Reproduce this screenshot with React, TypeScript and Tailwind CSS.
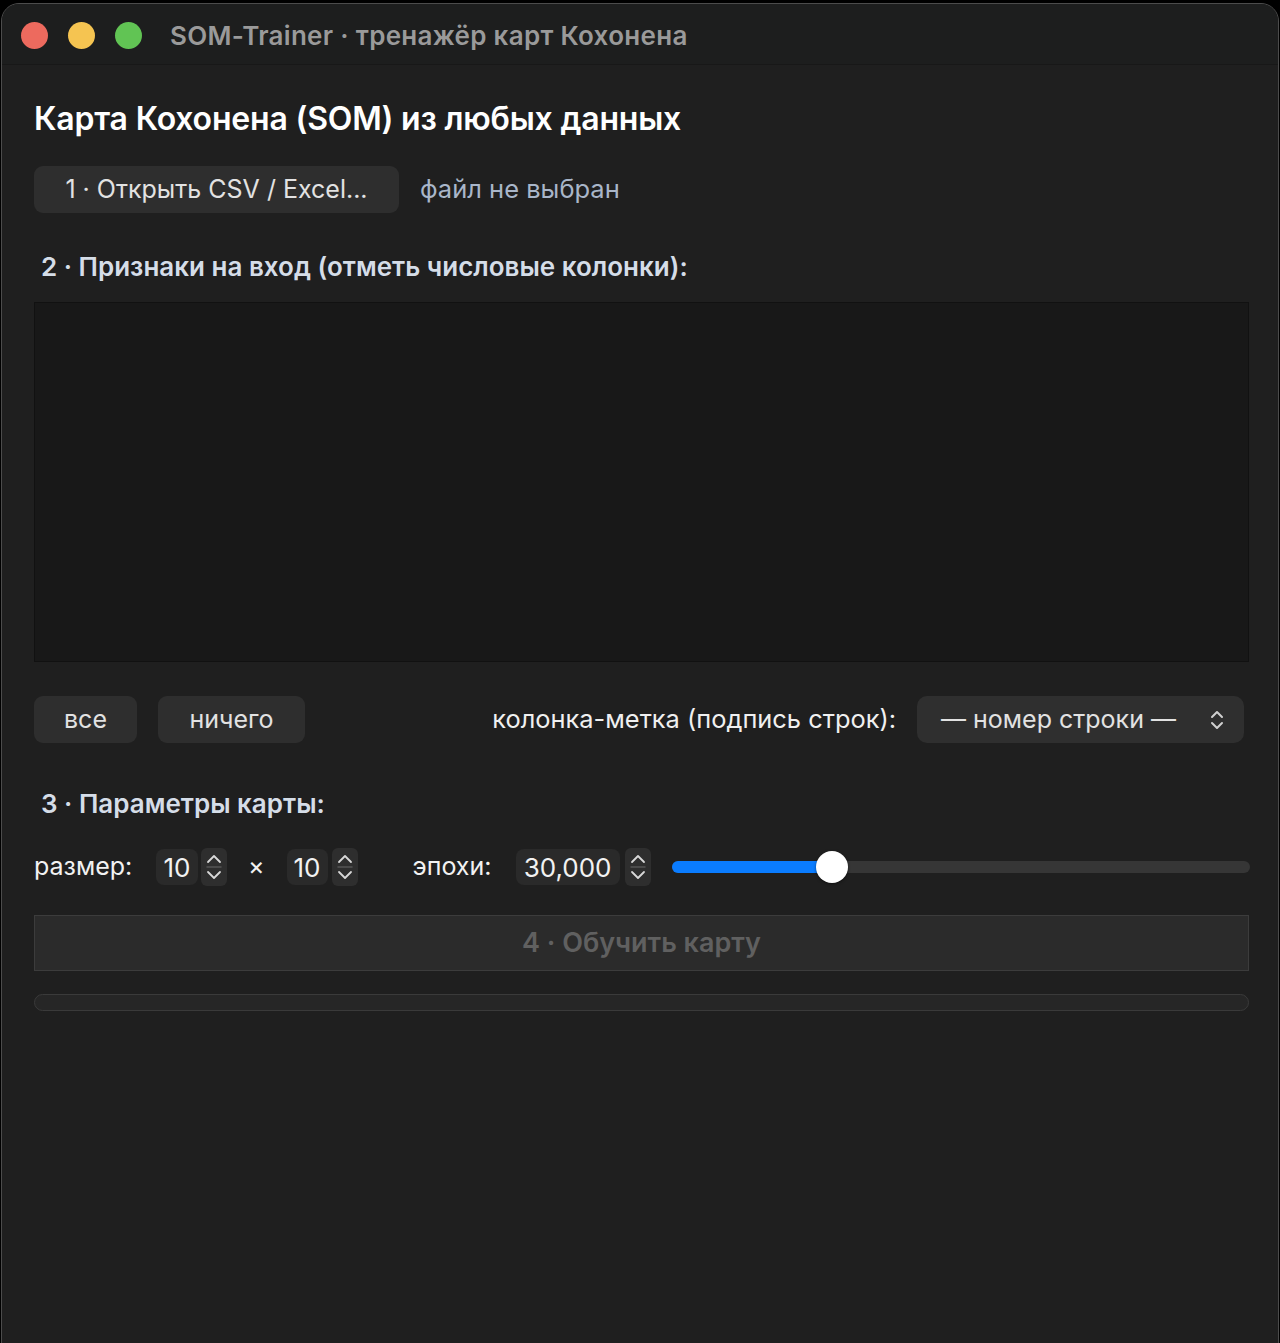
import React from 'react';

const font = { fontFamily: 'Inter, "Noto Sans", sans-serif' };

const Stepper: React.FC = () => (
  <div className="flex h-[38px] w-[26px] flex-col items-center justify-center rounded-[6px] bg-[#2e2e2e]">
    <svg width="18" height="34" viewBox="0 0 18 34" fill="none" stroke="#d8d8d8" strokeWidth="1.8" strokeLinecap="round" strokeLinejoin="round">
      <path d="M3 12 L9 6 L15 12" />
      <line x1="2" y1="17" x2="16" y2="17" stroke="#555" strokeWidth="1.5" />
      <path d="M3 22 L9 28 L15 22" />
    </svg>
  </div>
);

const NumField: React.FC<{ value: string; width: string }> = ({ value, width }) => (
  <div className={`flex h-[36px] ${width} items-center justify-center rounded-[8px] bg-[#2a2a2a] text-[26px] text-[#f2f2f2]`}>
    {value}
  </div>
);

const App: React.FC = () => {
  return (
    <div className="h-[1343px] w-[1280px] overflow-hidden bg-black pt-[3px] pl-[1px] pr-[1px]" style={font}>
      <div className="flex h-[1360px] flex-col overflow-hidden rounded-[18px] border border-[#4c4c4c] bg-[#1f1f1f]">
        {/* Title bar */}
        <div className="flex h-[61px] shrink-0 items-center border-b border-[#181818] bg-[#1d1e1e] pl-[19px] pt-[3px]">
          <div className="flex gap-[20px]">
            <span className="h-[27px] w-[27px] rounded-full bg-[#ed6a5e]" />
            <span className="h-[27px] w-[27px] rounded-full bg-[#f5c451]" />
            <span className="h-[27px] w-[27px] rounded-full bg-[#61c454]" />
          </div>
          <div className="ml-[28px] text-[26px] font-semibold tracking-[0.3px] text-[#9a9a9a]">
            SOM-Trainer · тренажёр карт Кохонена
          </div>
        </div>

        {/* Content */}
        <div className="flex flex-col px-[32px] pt-[34px]">
          <h1 className="text-[32px] font-semibold leading-[40px] tracking-[-0.2px] text-white">
            Карта Кохонена (SOM) из любых данных
          </h1>

          <div className="mt-[27px] flex items-center gap-[21px]">
            <button className="h-[47px] w-[365px] rounded-[9px] bg-[#2e2e2e] text-[25px] text-[#e2e2e2]">
              1 · Открыть CSV / Excel...
            </button>
            <span className="text-[25.5px] text-[#a9b6c9]">файл не выбран</span>
          </div>

          <div className="mt-[37px] pl-[7px] text-[26px] font-semibold leading-[34px] text-[#d5dde8]">
            2 · Признаки на вход (отметь числовые колонки):
          </div>

          <div className="mt-[18px] h-[360px] w-[1215px] border border-[#111111] bg-[#181818]" />

          <div className="mt-[34px] flex w-[1210px] items-center">
            <button className="h-[47px] w-[103px] rounded-[9px] bg-[#2e2e2e] text-[25px] text-[#e2e2e2]">все</button>
            <button className="ml-[21px] h-[47px] w-[147px] rounded-[9px] bg-[#2e2e2e] text-[25px] text-[#e2e2e2]">ничего</button>
            <span className="ml-auto text-[25.4px] text-[#f0f0f0]">колонка-метка (подпись строк):</span>
            <div className="ml-[21px] flex h-[47px] w-[327px] items-center rounded-[10px] bg-[#2f2f2f] pl-[24px] pr-[18px] text-[25px] text-[#e2e2e2]">
              <span>— номер строки —</span>
              <svg className="ml-auto" width="18" height="24" viewBox="0 0 18 24" fill="none" stroke="#d0d0d0" strokeWidth="2" strokeLinecap="round" strokeLinejoin="round">
                <path d="M4 9 L9 4 L14 9" />
                <path d="M4 15 L9 20 L14 15" />
              </svg>
            </div>
          </div>

          <div className="mt-[44px] pl-[7px] text-[26px] font-semibold leading-[34px] text-[#d5dde8]">
            3 · Параметры карты:
          </div>

          <div className="mt-[27px] flex w-[1216px] items-center">
            <span className="w-[100px] text-[25px] text-[#f2f2f2]">размер:</span>
            <div className="ml-[22px] flex items-center gap-[3px]">
              <NumField value="10" width="w-[42px]" />
              <Stepper />
            </div>
            <span className="ml-[21px] text-[25px] text-[#f2f2f2]">×</span>
            <div className="ml-[22px] flex items-center gap-[4px]">
              <NumField value="10" width="w-[41px]" />
              <Stepper />
            </div>
            <span className="ml-[55px] w-[81px] text-[25px] text-[#f2f2f2]">эпохи:</span>
            <div className="ml-[22px] flex items-center gap-[5px]">
              <NumField value="30,000" width="w-[104px]" />
              <Stepper />
            </div>
            <div className="relative ml-[21px] h-[12px] flex-1 rounded-full bg-[#363636]">
              <div className="h-full w-[161px] rounded-full bg-[#0a7cff]" />
              <div className="absolute left-[144px] top-1/2 h-[32px] w-[32px] -translate-y-1/2 rounded-full bg-white shadow-[0_1px_3px_rgba(0,0,0,0.5)]" />
            </div>
          </div>

          <button className="mt-[29px] h-[56px] w-[1215px] border border-[#3c3c3c] bg-[#2b2b2b] text-[27px] font-semibold text-[#606060]">
            4 · Обучить карту
          </button>

          <div className="mt-[23px] h-[17px] w-[1215px] rounded-full border border-[#3a3a3a] bg-[#262626]" />
        </div>
      </div>
    </div>
  );
};

export default App;
